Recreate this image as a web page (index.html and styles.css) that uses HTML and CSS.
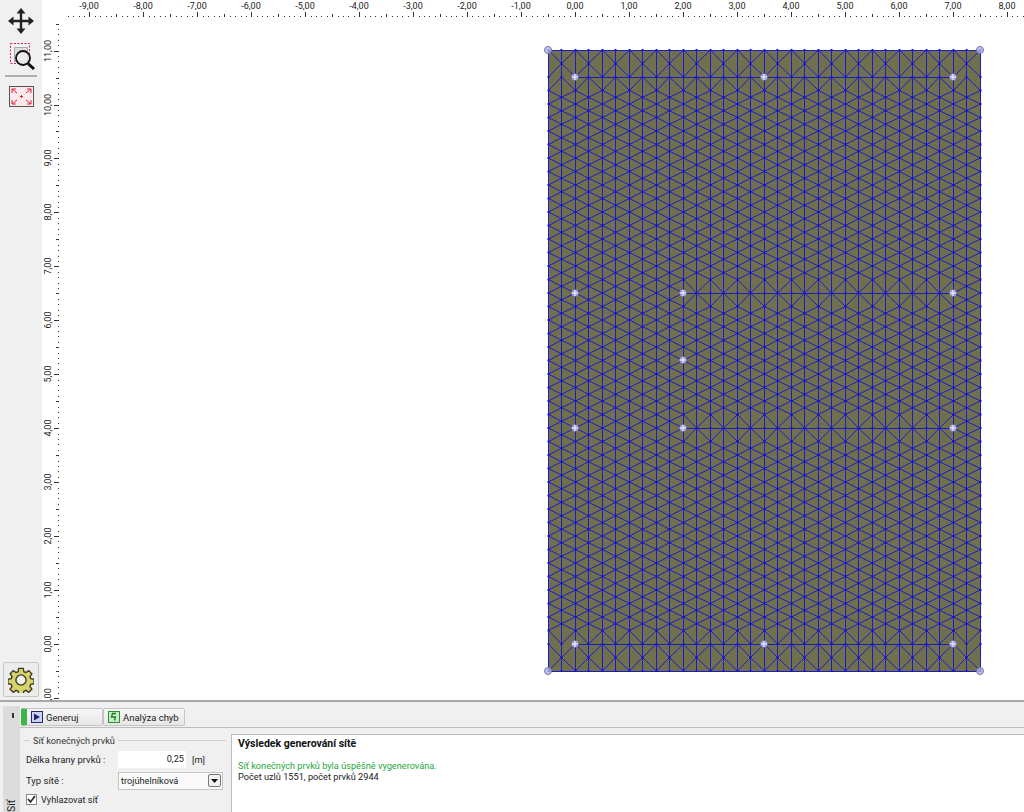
FILE: index.html
```html
<!DOCTYPE html>
<html lang="cs">
<head>
<meta charset="utf-8">
<title>Síť konečných prvků</title>
<link rel="stylesheet" href="styles.css">
</head>
<body>
<div class="app">
  <div class="work">
    <aside class="toolbar">
      <div class="tools">
        <button class="tool tool-move" aria-label="Posun">
          <svg width="26" height="26" viewBox="0 0 26 26"><path d="M13 0l4.500 5.500H14.200v6.300h6.300V8.500L26 13l-5.500 4.500v-3.300h-6.300v6.300h3.300L13 26l-4.500-5.500h3.300v-6.300H5.500v3.300L0 13l5.500-4.500v3.300h6.300V5.500H8.500z" fill="#222"/></svg>
        </button>
        <button class="tool tool-zoom" aria-label="Lupa">
          <svg width="26" height="27" viewBox="0 0 26 27"><rect x=".5" y=".5" width="19" height="20" fill="#f4f4f4" stroke="#d8204a" stroke-dasharray="2 1.500"/><rect x="4.500" y="4.500" width="13" height="14" fill="#ddd" stroke="#aaa"/><circle cx="13" cy="15" r="7" fill="#f2f2f2" fill-opacity=".7" stroke="#111" stroke-width="1.800"/><path d="M18 20.500l6 5.500" stroke="#111" stroke-width="3"/></svg>
        </button>
        <hr class="tool-sep">
        <button class="tool tool-fit" aria-label="Celý pohled">
          <svg width="25" height="21" viewBox="0 0 25 21"><rect x=".5" y=".5" width="24" height="20" fill="#fff" stroke="#555"/><rect x="1" y="1" width="23" height="19" fill="#fbeaea"/><path d="M3 3h4M3 3v4M3 3l5 4M22 3h-4M22 3v4M22 3l-5 4M3 18h4M3 18v-4M3 18l5-4M22 18h-4M22 18v-4M22 18l-5-4M11 10.500h3M12.500 9v3" stroke="#e0203c" fill="none"/></svg>
        </button>
      </div>
      <button class="gear" aria-label="Nastavení">
        <svg width="26" height="26" viewBox="0 0 28 28"><path d="M11.600 1.500h4.800l.7 3.600 2.200.9 3-2.100 3.400 3.400-2.100 3 .9 2.200 3.600.7v4.800l-3.600.7-.9 2.200 2.100 3-3.400 3.400-3-2.100-2.200.9-.7 3.600h-4.800l-.7-3.600-2.200-.9-3 2.100-3.400-3.400 2.100-3-.9-2.200-3.600-.7v-4.800l3.600-.7.9-2.200-2.100-3 3.400-3.400 3 2.100 2.200-.9z" fill="#d6d36a" stroke="#3c3c24" stroke-width="1.500"/><circle cx="14" cy="14" r="5.500" fill="#efefef" stroke="#3c3c24" stroke-width="1.500"/></svg>
      </button>
    </aside>
    <svg class="canvas" id="canvas" width="982" height="700" viewBox="42 0 982 700"></svg>
  </div>
  <section class="panel">
    <div class="strip">
      <span class="strip-grip"></span>
      <span class="strip-label">Síť</span>
    </div>
    <div class="panel-main">
      <div class="tabs">
        <button class="tab tab-active">
          <svg width="12" height="12" viewBox="0 0 12 12"><rect x=".5" y=".5" width="11" height="11" fill="#cfd4ee" stroke="#23237a"/><path d="M3 2.500l6 3.500-6 3.500z" fill="#23237a"/></svg>
          <span>Generuj</span>
        </button>
        <button class="tab">
          <svg width="12" height="12" viewBox="0 0 12 12"><rect x=".5" y=".5" width="11" height="11" fill="#c8ecc4" stroke="#2e8b36"/><path d="M8 2.500H4.500L3.500 6h4l-1 3.500" fill="none" stroke="#1d7a2a" stroke-width="1.300"/></svg>
          <span>Analýza chyb</span>
        </button>
      </div>
      <div class="content">
        <form class="form">
          <div class="legend"><span>Síť konečných prvků</span></div>
          <div class="row">
            <label class="lbl">Délka hrany prvků :</label>
            <span class="input">0,25</span>
            <span class="unit">[m]</span>
          </div>
          <div class="row row-select">
            <label class="lbl">Typ sítě :</label>
            <span class="select">trojúhelníková<i class="select-btn"><svg width="7" height="4" viewBox="0 0 7 4"><path d="M0 0h7L3.500 4z" fill="#111"/></svg></i></span>
          </div>
          <div class="row row-check">
            <span class="check"><svg width="9" height="9" viewBox="0 0 9 9"><path d="M1 4l2.500 3L8 1" fill="none" stroke="#222" stroke-width="1.600"/></svg></span>
            <label class="lbl-check">Vyhlazovat síť</label>
          </div>
        </form>
        <div class="result">
          <h2 class="result-title">Výsledek generování sítě</h2>
          <p class="ok">Síť konečných prvků byla úspěšně vygenerována.</p>
          <p class="info">Počet uzlů 1551, počet prvků 2944</p>
        </div>
      </div>
    </div>
  </section>
</div>
<script src="mesh.js"></script>
</body>
</html>
```
FILE: styles.css
```css
* { box-sizing: border-box; }
html, body { margin: 0; height: 100%; overflow: hidden; }
body { font-family: Roboto, "Liberation Sans", sans-serif; font-size: 9.2px; color: #222; background: #f0f0f0; }
button { font: inherit; color: inherit; padding: 0; margin: 0; background: none; border: 0; }
.app { display: flex; flex-direction: column; width: 1024px; height: 812px; }
.work { display: flex; height: 700px; background: #fff; }
.toolbar { width: 42px; background: #f0f0f0; display: flex; flex-direction: column; justify-content: space-between; padding: 8px 3px 3px; }
.tools { display: flex; flex-direction: column; align-items: center; }
.tool { display: block; line-height: 0; }
.tool-move { height: 26px; }
.tool-zoom { margin-top: 9px; margin-left: 3px; }
.tool-sep { width: 32px; height: 2px; border: 0; margin: 5px 0 9px; background: #b0b0b0; }
.gear { width: 36px; height: 35px; border: 1px solid #c8c8c8; border-radius: 2px; background: #ececec; display: flex; align-items: center; justify-content: center; }
.canvas { display: block; }
.rl { font: 9px Roboto, "Liberation Sans", sans-serif; fill: #222; }
.panel { flex: 1; display: flex; min-height: 0; border-top: 2px solid #a8a8a8; padding-top: 4px; overflow: hidden; }
.strip { width: 20px; margin-left: 3px; margin-right: 0; display: flex; flex-direction: column; align-items: center; justify-content: space-between; background: #dcdcdc; flex: none; width: 17px; }
.strip-grip { width: 2px; height: 5px; margin-top: 7px; margin-left: 3px; background: #333; }
.strip-label { writing-mode: vertical-rl; transform: rotate(180deg); font-size: 10.5px; height: 14px; line-height: 11px; margin-right: 1px; }
.panel-main { flex: 1; display: flex; flex-direction: column; min-width: 0; }
.tabs { display: flex; height: 22px; padding: 2px 0 0 1px; border-bottom: 1px solid #bdbdbd; }
.tab { display: flex; align-items: center; gap: 3px; height: 18px; border: 1px solid #c4c4c4; border-radius: 2px; background: linear-gradient(#f7f7f7, #e6e6e6); font-size: 9.5px; }
.tab-active { width: 82px; padding-left: 4px; border-left: 6px solid #3db54a; }
.tab:not(.tab-active) { width: 82px; padding-left: 4px; }
.content { flex: 1; display: flex; min-height: 0; margin-top: 6px; }
.form { width: 211px; padding: 0 5px 0 4px; }
.legend { display: flex; align-items: center; gap: 3px; height: 12px; color: #333; }
.legend::before, .legend::after { content: ""; height: 1px; background: #cfcfcf; }
.legend::before { width: 6px; }
.legend::after { flex: 1; }
.row { display: flex; align-items: center; margin-top: 5px; height: 17px; padding-left: 2px; }
.lbl { width: 92px; font-size: 9.5px; }
.input { width: 68px; height: 17px; background: #fff; text-align: right; padding: 2px 2px 0 0; }
.unit { margin-left: 6px; }
.row-select { margin-top: 4px; }
.select { width: 105px; height: 18px; border: 1px solid #c4c4c4; background: #fafafa; display: flex; align-items: center; justify-content: space-between; padding: 0 1px 0 2px; }
.select-btn { width: 13px; height: 13px; border: 1px solid #777; border-radius: 2px; background: #f2f2f2; display: flex; align-items: center; justify-content: center; }
.row-check { margin-top: 2px; }
.check { width: 11px; height: 11px; border: 1px solid #888; background: #fff; line-height: 0; margin-right: 4px; }
.result { flex: 1; background: #fff; border: 1px solid #bdbdbd; border-right: 0; border-bottom: 0; padding: 3px 6px; color: #222; }
.result-title { margin: 0 0 10px; font-size: 10.5px; line-height: 12px; font-weight: 700; color: #111; }
.ok { margin: 0; color: #27a83c; line-height: 11px; }
.info { margin: 0; line-height: 11px; }
```
FILE: mesh.js
```js
(function () {
  var NS = "http://www.w3.org/2000/svg";
  var svg = document.getElementById("canvas");
  var PX = 53.95, X0 = 575, Y0 = 644;
  function el(name, attrs, parent, text) {
    var e = document.createElementNS(NS, name);
    for (var k in attrs) e.setAttribute(k, attrs[k]);
    if (text) e.textContent = text;
    (parent || svg).appendChild(e);
    return e;
  }
  function label(v) { return v.toFixed(2).replace(".", ","); }

  // Rulers: a tick every 0.1 m, longer at 0.5 m and at each metre
  var ticks = "";
  function tickLen(i) { return i % 10 === 0 ? 5 : i % 5 === 0 ? 3 : 1; }
  for (var i = -94; i <= 83; i++) {
    var x = Math.round(X0 + i * PX / 10);
    ticks += "M" + (x + .5) + " " + (17 - tickLen(i)) + "v" + tickLen(i);
    if (i % 10 === 0) el("text", { x: x, y: 9, "class": "rl", "text-anchor": "middle" }, null, label(i / 10));
  }
  for (var j = 115; j >= -10; j--) {
    var y = Math.round(Y0 - j * PX / 10);
    ticks += "M" + (59 - tickLen(j)) + " " + (y + .5) + "h" + tickLen(j);
    if (j % 10 === 0) {
      el("text", { x: 0, y: 0, "class": "rl", "text-anchor": "middle", transform: "translate(51 " + y + ") rotate(-90)" }, null, label(j / 10));
    }
  }
  el("path", { d: ticks, stroke: "#333", fill: "none" });

  // Mesh: staggered columns, 13.5 px apart in both directions (0.25 m edge)
  var L = 548, R = 980, T = 50, B = 671, S = 13.5;
  var TOP = 77, BOT = 644;
  var lines = [
    { y: TOP, a: 575, b: 953 }, { y: 293, a: 683, b: 953 },
    { y: 428, a: 683, b: 953 }, { y: BOT, a: 575, b: 953 }
  ];
  el("rect", { x: L, y: T, width: R - L, height: B - T, fill: "#70704f" });
  var cols = [], n = Math.round((R - L) / S);
  for (var c = 0; c <= n; c++) {
    var cx = Math.floor(L + c * S) + .5, odd = c % 2 === 1, set = {};
    set[T] = T; set[B] = B;
    for (var yy = T + S + (odd ? -S / 2 : 0); yy < B - 1; yy += S) {
      if (yy <= TOP + 7 || yy >= BOT - 7) continue;
      var v = yy;
      lines.forEach(function (l) {
        if (cx > l.a && cx < l.b && Math.abs(v - l.y) < 7) v = l.y;
      });
      set[v] = v;
    }
    set[TOP] = TOP; set[BOT] = BOT;
    if (odd) { set[(T + TOP) / 2] = (T + TOP) / 2; set[(B + BOT) / 2] = (B + BOT) / 2; }
    var col = Object.keys(set).map(function (q) { return set[q]; }).sort(function (a, b) { return a - b; });
    cols.push({ x: cx, ys: col });
  }
  var d = "", dots = "";
  cols.forEach(function (k, ci) {
    d += "M" + k.x + " " + T + "V" + B;
    k.ys.forEach(function (ya) {
      dots += "M" + (k.x - 1) + " " + ya + "h2";
    });
    var nx = cols[ci + 1];
    if (!nx) return;
    k.ys.forEach(function (ya) {
      nx.ys.forEach(function (yb) {
        if (ya !== yb && Math.abs(ya - yb) < 14) d += "M" + k.x + " " + ya + "L" + nx.x + " " + yb;
      });
    });
  });
  lines.forEach(function (l) { d += "M" + l.a + " " + (l.y + .5) + "H" + l.b; });
  d += "M" + L + " " + (T + .5) + "H" + R + "M" + L + " " + (B + .5) + "H" + R;
  el("path", { d: d, stroke: "#1c1cc4", "stroke-width": 1, fill: "none" });
  el("path", { d: dots, stroke: "#1414d0", "stroke-width": 2, fill: "none" });

  // Boundary corners
  [[548, 50], [980, 50], [548, 671], [980, 671]].forEach(function (p) {
    el("circle", { cx: p[0], cy: p[1], r: 3.5, fill: "#b4b4e0", "fill-opacity": .8, stroke: "#7474b8" });
  });
  // Defined points
  [[575, 77], [764, 77], [953, 77], [575, 293], [683, 293], [953, 293], [683, 360],
   [575, 428], [683, 428], [953, 428], [575, 644], [764, 644], [953, 644]].forEach(function (p) {
    el("circle", { cx: p[0], cy: p[1], r: 3.5, fill: "#a8a8ff", "fill-opacity": .8 });
    el("path", { d: "M" + (p[0] - 3) + " " + p[1] + "h6M" + p[0] + " " + (p[1] - 3) + "v6", stroke: "#fff" });
  });
})();
```
